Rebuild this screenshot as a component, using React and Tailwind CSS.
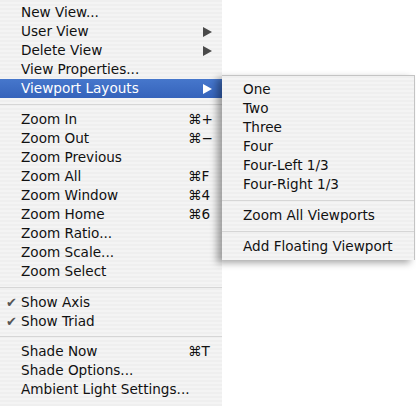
import React from "react";

const font = { fontFamily: '"DejaVu Sans", "Liberation Sans", sans-serif' };

function Arrow({ white }) {
  return (
    <svg width="9" height="10" viewBox="0 0 9 10" className="shrink-0">
      <polygon points="0,0 9,5 0,10" fill={white ? "#ffffff" : "#4a4a4a"} />
    </svg>
  );
}

function Row({ label, shortcut, arrow, check, active }) {
  return (
    <div
      className={
        "flex items-center h-[19px] pl-[21px] pr-[10px] relative " +
        (active ? "bg-[linear-gradient(#4677cc,#3563bb)] text-white" : "text-[#111]")
      }
    >
      {check && (
        <span className="absolute left-[6px] top-0 h-[19px] flex items-center text-[13px] text-[#555]">✔</span>
      )}
      <span className="flex-1 whitespace-nowrap">{label}</span>
      {shortcut && <span className="w-[24px] whitespace-nowrap">{shortcut}</span>}
      {arrow && <Arrow white={active} />}
    </div>
  );
}

function Sep({ h }) {
  return (
    <div className={(h === 11 ? "h-[11px]" : "h-[12px]") + " flex items-center"}>
      <div className="w-full h-[1px] bg-[#d6d6d6]" />
    </div>
  );
}

function SubRow({ label }) {
  return (
    <div className="flex items-center h-[19px] pl-[21px] text-[#111] whitespace-nowrap">{label}</div>
  );
}

const stripes =
  "bg-[repeating-linear-gradient(180deg,#efefef_0px,#efefef_2px,#f4f4f4_2px,#f4f4f4_4px)]";

export default function App() {
  return (
    <div className="relative w-[416px] h-[406px] bg-white overflow-hidden text-[13.6px] leading-none" style={font}>
      <div className={"w-[222px] h-[406px] pt-[3px] " + stripes}>
        <Row label="New View..." />
        <Row label="User View" arrow />
        <Row label="Delete View" arrow />
        <Row label="View Properties..." />
        <Row label="Viewport Layouts" arrow active />
        <Sep />
        <Row label="Zoom In" shortcut="⌘+" />
        <Row label="Zoom Out" shortcut="⌘−" />
        <Row label="Zoom Previous" />
        <Row label="Zoom All" shortcut="⌘F" />
        <Row label="Zoom Window" shortcut="⌘4" />
        <Row label="Zoom Home" shortcut="⌘6" />
        <Row label="Zoom Ratio..." />
        <Row label="Zoom Scale..." />
        <Row label="Zoom Select" />
        <Sep />
        <Row label="Show Axis" check />
        <Row label="Show Triad" check />
        <Sep h={11} />
        <Row label="Shade Now" shortcut="⌘T" />
        <Row label="Shade Options..." />
        <Row label="Ambient Light Settings..." />
      </div>

      <div
        className={
          "absolute left-[222px] top-[75px] w-[193px] pt-[4px] pb-[4px] border-t border-r border-[#c4c4c4] shadow-[-5px_3px_7px_rgba(0,0,0,0.35)] " +
          stripes
        }
      >
        <SubRow label="One" />
        <SubRow label="Two" />
        <SubRow label="Three" />
        <SubRow label="Four" />
        <SubRow label="Four-Left 1/3" />
        <SubRow label="Four-Right 1/3" />
        <Sep />
        <SubRow label="Zoom All Viewports" />
        <Sep />
        <SubRow label="Add Floating Viewport" />
      </div>
    </div>
  );
}
